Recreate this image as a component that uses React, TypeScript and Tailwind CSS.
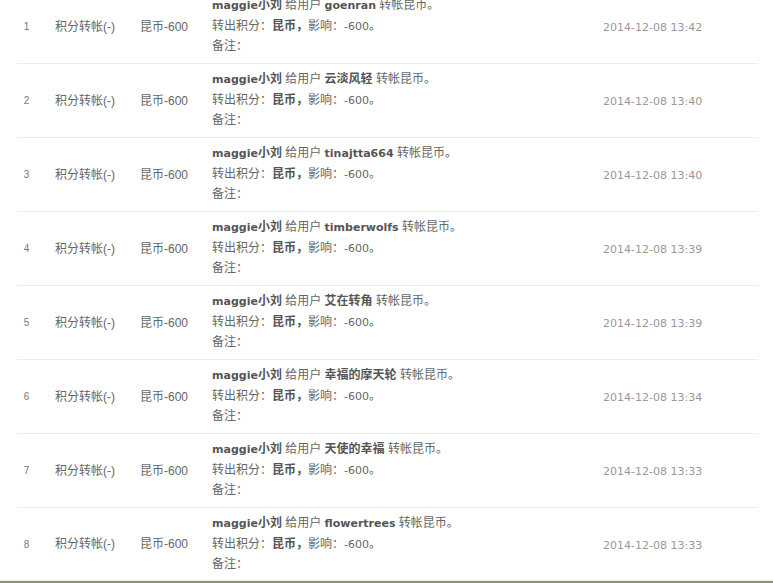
const ROWS = [
  { id: 1, to: "goenran", time: "2014-12-08 13:42" },
  { id: 2, to: "云淡风轻", time: "2014-12-08 13:40" },
  { id: 3, to: "tinajtta664", time: "2014-12-08 13:40" },
  { id: 4, to: "timberwolfs", time: "2014-12-08 13:39" },
  { id: 5, to: "艾在转角", time: "2014-12-08 13:39" },
  { id: 6, to: "幸福的摩天轮", time: "2014-12-08 13:34" },
  { id: 7, to: "天使的幸福", time: "2014-12-08 13:33" },
  { id: 8, to: "flowertrees", time: "2014-12-08 13:33" },
];

// latin runs look like Verdana/Tahoma in the shot
const LATIN = "font-['DejaVu_Sans',sans-serif] text-[11px] leading-none";

export default function App() {
  return (
    <div
      className="w-[773px] h-[583px] overflow-hidden bg-white text-[12px] text-[#666]"
      style={{ fontFamily: '"Liberation Sans", "Noto Sans CJK SC", sans-serif' }}
    >
      <div className="-mt-[10px] ml-[17px] w-[741px]">
        {ROWS.map((row, i) => {
          const last = i === ROWS.length - 1;
          const ascii = /^[\x00-\x7f]+$/.test(row.to);
          return (
            <div
              key={row.id}
              className={`flex items-center ${last ? "h-[72px]" : "h-[74px] border-b border-[#e8eef0]"}`}
            >
              <div className="w-[19px] text-center text-[10px] text-[#777]">{row.id}</div>
              <div className="w-[104px] pl-[19px] text-[#666]">积分转帐(-)</div>
              <div className="w-[72px] text-[#666]">昆币-600</div>
              <div className="w-[391px] self-start pt-[5px] leading-[20.5px] text-[#666]">
                <div>
                  <b className="text-[#555]">
                    <span className={LATIN}>maggie</span>小刘
                  </b>{" "}
                  给用户{" "}
                  <b className={`text-[#555] ${ascii ? LATIN : ""}`}>{row.to}</b> 转帐昆币。
                </div>
                <div>
                  转出积分：<b className="text-[#555]">昆币，</b>影响：<span className={LATIN}>-600</span>。
                </div>
                <div>备注：</div>
              </div>
              <div className={`flex-1 pt-[2px] text-[#999] ${LATIN}`}>{row.time}</div>
            </div>
          );
        })}
      </div>
      <div className="h-[1px] bg-[#ecebdc]" />
      <div className="h-[2px] bg-[#8f8f82]" />
    </div>
  );
}
